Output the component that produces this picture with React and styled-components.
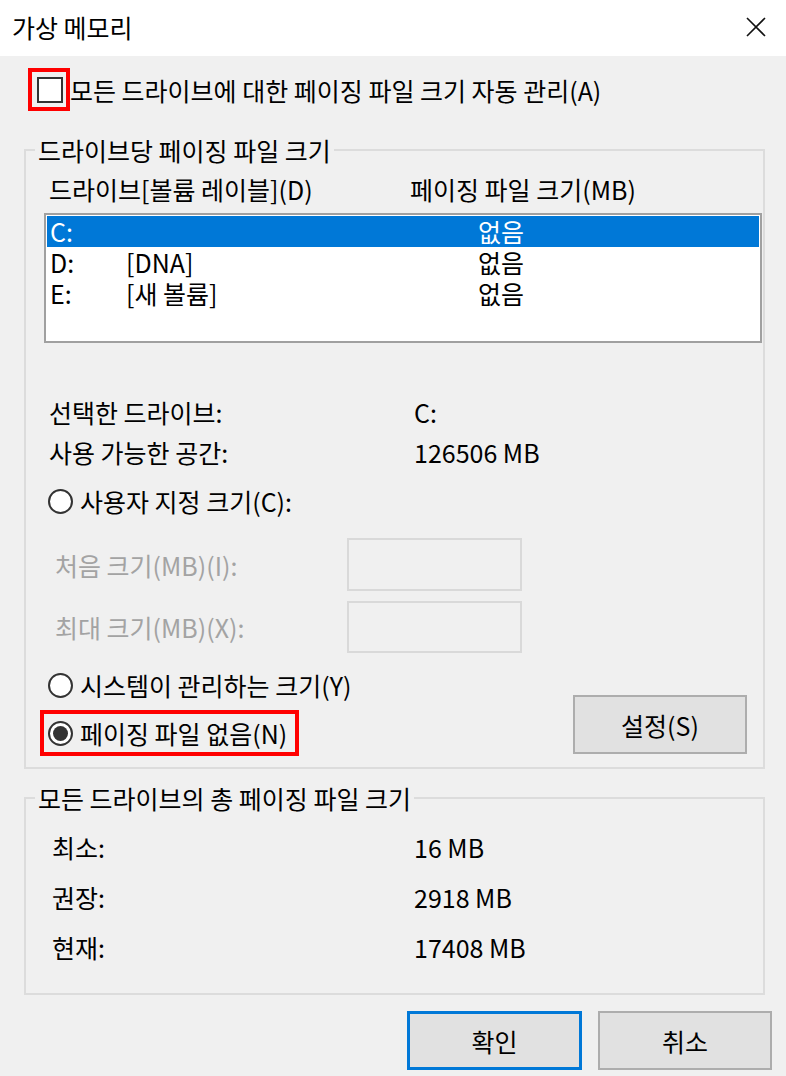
import React from 'react';
import styled, { createGlobalStyle } from 'styled-components';

const GlobalStyle = createGlobalStyle`
  html, body {
    margin: 0;
    padding: 0;
    background: #f0f0f0;
  }
  body {
    font-family: "Noto Sans CJK KR", "Noto Sans", sans-serif;
    font-size: 25px;
    color: #000;
  }
`;

const Window = styled.div`
  width: 786px;
  height: 1076px;
  background: #f0f0f0;
  overflow: hidden;
`;

const TitleBar = styled.div`
  height: 56px;
  background: #fff;
  display: flex;
  align-items: center;
  justify-content: space-between;
  padding: 0 20px 2px 12px;
  box-sizing: border-box;
`;

const TitleText = styled.div`
  line-height: 30px;
`;

const Body = styled.div`
  padding: 12px 21px 0 24px;
`;

// red highlight around the thing that matters
const Highlight = styled.div`
  display: inline-flex;
  align-self: flex-start;
  align-items: center;
  border: 4px solid #ff0000;
  padding: ${p => p.$pad || '4px'};
  margin: ${p => p.$m || '0'};
`;

const CheckRow = styled.div`
  display: flex;
  align-items: center;
  margin-left: 4px;
  height: 43px;
`;

const CheckBox = styled.div`
  width: 26px;
  height: 26px;
  box-sizing: border-box;
  border: 2px solid #333;
  background: #fff;
`;

const Label = styled.span`
  line-height: 30px;
  white-space: nowrap;
  color: ${p => (p.$disabled ? '#a3a3a3' : '#000')};
`;

const Group = styled.fieldset`
  margin: ${p => p.$mt || '0'} 0 0 0;
  width: 741px;
  box-sizing: border-box;
  border: 2px solid #dcdcdc;
  padding: ${p => p.$pad};
  min-width: 0;
`;

const Legend = styled.legend`
  padding: 0 3px;
  margin-left: ${p => p.$ml};
  line-height: 30px;
  white-space: nowrap;
`;

const HeaderRow = styled.div`
  display: grid;
  grid-template-columns: 361px 1fr;
  height: 32px;
  align-items: center;
  padding-left: 5px;
`;

const ListBox = styled.div`
  margin-top: 8px;
  height: 130px;
  box-sizing: border-box;
  border: 2px solid #a0a0a0;
  background: #fff;
  padding: 1px;
`;

const ListRow = styled.div`
  display: grid;
  grid-template-columns: 76px 352px 1fr;
  height: 31px;
  align-items: center;
  padding-left: 3px;
  background: ${p => (p.$selected ? '#0078d7' : 'transparent')};
  color: ${p => (p.$selected ? '#fff' : '#000')};
  line-height: 31px;
`;

const InfoRow = styled.div`
  display: grid;
  grid-template-columns: ${p => p.$col || '365px'} 1fr;
  height: ${p => p.$h || '40px'};
  align-items: center;
  padding-left: ${p => p.$pl || '5px'};
  margin-top: ${p => p.$mt || '0'};
`;

const RadioRow = styled.div`
  display: flex;
  align-items: center;
  gap: 7px;
  height: 40px;
  padding-left: 4px;
  margin-top: ${p => p.$mt || '0'};
`;

const RadioInner = styled.div`
  display: flex;
  align-items: center;
  gap: 7px;
`;

const Radio = styled.div`
  width: 25px;
  height: 25px;
  box-sizing: border-box;
  border-radius: 50%;
  border: 2px solid #333;
  background: #fff;
  display: flex;
  align-items: center;
  justify-content: center;
  flex-shrink: 0;

  &::after {
    content: '';
    display: ${p => (p.$checked ? 'block' : 'none')};
    width: 15px;
    height: 15px;
    border-radius: 50%;
    background: #333;
  }
`;

const SizeRow = styled.div`
  display: grid;
  grid-template-columns: 292px 175px;
  align-items: center;
  padding-left: 11px;
  margin-top: ${p => p.$mt};
`;

const SizeInput = styled.div`
  height: ${p => p.$h};
  box-sizing: border-box;
  border: 2px solid #d9d9d9;
  background: #f0f0f0;
`;

const BottomRow = styled.div`
  display: flex;
  justify-content: space-between;
  align-items: flex-start;
  height: 89px;
  margin-top: 12px;
`;

const LeftCol = styled.div`
  display: flex;
  flex-direction: column;
`;

const Button = styled.div`
  width: ${p => p.$w || '175px'};
  height: 59px;
  box-sizing: border-box;
  border: ${p => (p.$default ? '3px solid #0078d7' : '2px solid #adadad')};
  background: #e1e1e1;
  display: flex;
  align-items: center;
  justify-content: center;
  margin: ${p => p.$m || '0'};
`;

const ButtonBar = styled.div`
  display: flex;
  justify-content: flex-end;
  gap: 16px;
  margin: 16px -7px 0 0;
`;

const CloseIcon = () => (
  <svg width="20" height="20" viewBox="0 0 20 20">
    <path d="M1 1 L19 19 M19 1 L1 19" stroke="#111" strokeWidth="1.6" />
  </svg>
);

const drives = [
  { letter: 'C:', label: '', size: '없음', selected: true },
  { letter: 'D:', label: '[DNA]', size: '없음' },
  { letter: 'E:', label: '[새 볼륨]', size: '없음' },
];

const totals = [
  ['최소:', '16 MB'],
  ['권장:', '2918 MB'],
  ['현재:', '17408 MB'],
];

export default function App() {
  return (
    <Window>
      <GlobalStyle />
      <TitleBar>
        <TitleText>가상 메모리</TitleText>
        <CloseIcon />
      </TitleBar>

      <Body>
        <CheckRow>
          <Highlight $pad="5px 3px 4px 5px">
            <CheckBox />
          </Highlight>
          <Label>모든 드라이브에 대한 페이징 파일 크기 자동 관리(A)</Label>
        </CheckRow>

        <Group $mt="24px" $pad="8px 1px 13px 18px">
          <Legend $ml="-9px">드라이브당 페이징 파일 크기</Legend>
          <HeaderRow>
            <Label>드라이브[볼륨 레이블](D)</Label>
            <Label>페이징 파일 크기(MB)</Label>
          </HeaderRow>

          <ListBox>
            {drives.map(d => (
              <ListRow key={d.letter} $selected={d.selected}>
                <span>{d.letter}</span>
                <span>{d.label}</span>
                <span>{d.size}</span>
              </ListRow>
            ))}
          </ListBox>

          <InfoRow $mt="49px">
            <Label>선택한 드라이브:</Label>
            <Label>C:</Label>
          </InfoRow>
          <InfoRow>
            <Label>사용 가능한 공간:</Label>
            <Label>126506 MB</Label>
          </InfoRow>

          <RadioRow $mt="9px">
            <Radio />
            <Label>사용자 지정 크기(C):</Label>
          </RadioRow>

          <SizeRow $mt="17px">
            <Label $disabled>처음 크기(MB)(I):</Label>
            <SizeInput $h="53px" />
          </SizeRow>
          <SizeRow $mt="10px">
            <Label $disabled>최대 크기(MB)(X):</Label>
            <SizeInput $h="52px" />
          </SizeRow>

          <BottomRow>
            <LeftCol>
              <RadioRow>
                <Radio />
                <Label>시스템이 관리하는 크기(Y)</Label>
              </RadioRow>
              <Highlight $pad="4px 8px 4px 4px" $m="5px 0 0 -4px">
                <RadioInner>
                  <Radio $checked />
                  <Label>페이징 파일 없음(N)</Label>
                </RadioInner>
              </Highlight>
            </LeftCol>
            <Button $w="174px" $m="30px 15px 0 0">설정(S)</Button>
          </BottomRow>
        </Group>

        <Group $mt="14px" $pad="9px 1px 21px 26px">
          <Legend $ml="-17px">모든 드라이브의 총 페이징 파일 크기</Legend>
          {totals.map(([k, v]) => (
            <InfoRow key={k} $h="50px" $col="362px" $pl="0">
              <Label>{k}</Label>
              <Label>{v}</Label>
            </InfoRow>
          ))}
        </Group>

        <ButtonBar>
          <Button $default>확인</Button>
          <Button $w="174px">취소</Button>
        </ButtonBar>
      </Body>
    </Window>
  );
}
